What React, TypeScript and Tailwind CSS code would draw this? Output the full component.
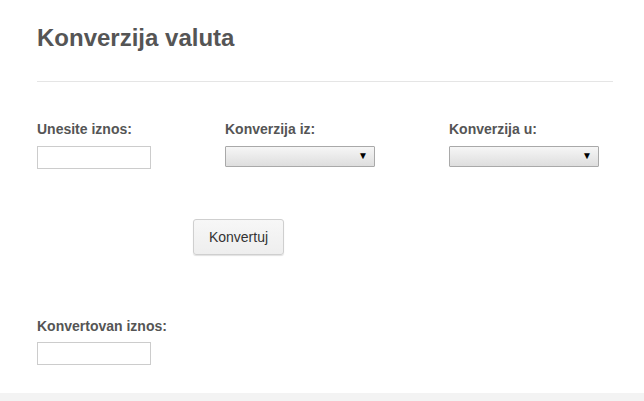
const FONT = { fontFamily: '"Liberation Sans", Arial, sans-serif' };

const Select = () => (
  <div className="relative h-[21px] w-[150px] border border-[#a9a9a9] bg-gradient-to-b from-[#f6f6f6] to-[#dedede] rounded-[1px]">
    <span className="absolute right-[6px] top-[3px] text-[10px] leading-[12px] text-black">▼</span>
  </div>
);

const TextInput = () => (
  <input
    type="text"
    className="block h-[23px] w-[114px] border border-[#cccccc] bg-white outline-none"
  />
);

const App = () => {
  return (
    <div className="min-h-[401px] w-[644px] bg-white flex flex-col text-[#555555]" style={FONT}>
      <div className="flex-1 pl-[37px] pr-[31px]">
        <h1 className="mt-[24px] text-[24px] leading-[28px] font-bold text-[#555555]">
          Konverzija valuta
        </h1>
        <div className="mt-[29px] h-px bg-[#e5e5e5]" />

        <div className="mt-[37px] flex">
          <div className="w-[188px]">
            <div className="text-[14px] leading-[20px] font-bold">Unesite iznos:</div>
            <div className="mt-[7px]">
              <TextInput />
            </div>
          </div>
          <div className="w-[224px]">
            <div className="text-[14px] leading-[20px] font-bold">Konverzija iz:</div>
            <div className="mt-[7px]">
              <Select />
            </div>
          </div>
          <div>
            <div className="text-[14px] leading-[20px] font-bold">Konverzija u:</div>
            <div className="mt-[7px]">
              <Select />
            </div>
          </div>
        </div>

        <div className="mt-[50px] pl-[156px]">
          <button className="h-[36px] w-[91px] rounded-[3px] border border-[#cfcfcf] bg-gradient-to-b from-[#f7f7f7] to-[#eeeeee] text-[14px] text-[#333333] shadow-[0_1px_1px_rgba(0,0,0,0.12)]">
            Konvertuj
          </button>
        </div>

        <div className="mt-[61px]">
          <div className="text-[14px] leading-[20px] font-bold">Konvertovan iznos:</div>
          <div className="mt-[6px]">
            <TextInput />
          </div>
        </div>
      </div>
      <div className="h-[8px] bg-[#f3f3f3]" />
    </div>
  );
};

export default App;
